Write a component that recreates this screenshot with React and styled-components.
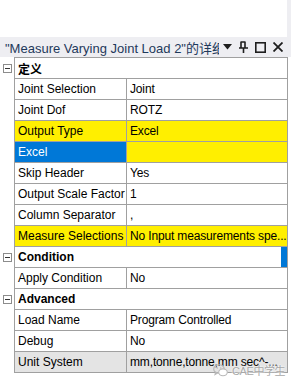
import React from "react";
import styled, { createGlobalStyle } from "styled-components";

const GlobalStyle = createGlobalStyle`
  html, body {
    margin: 0;
    padding: 0;
    background: #ffffff;
  }
  body {
    font-family: "Liberation Sans", "Noto Sans CJK SC", sans-serif;
  }
`;

const rows = [
  { type: "cat", label: "定义" },
  { name: "Joint Selection", value: "Joint" },
  { name: "Joint Dof", value: "ROTZ" },
  { name: "Output Type", value: "Excel", tone: "yellow" },
  { name: "Excel", value: "", tone: "selected" },
  { name: "Skip Header", value: "Yes" },
  { name: "Output Scale Factor", value: "1" },
  { name: "Column Separator", value: "," },
  { name: "Measure Selections", value: "No Input measurements spe...", tone: "yellow" },
  { type: "cat", label: "Condition", marker: true },
  { name: "Apply Condition", value: "No" },
  { type: "cat", label: "Advanced" },
  { name: "Load Name", value: "Program Controlled" },
  { name: "Debug", value: "No" },
  { name: "Unit System", value: "mm,tonne,tonne,mm sec^-...", tone: "readonly" },
];

export default function App() {
  return (
    <>
      <GlobalStyle />
      <Page>
        <TopSpace />
        <TitleBar>
          <TitleText>"Measure Varying Joint Load 2"的详细信息</TitleText>
          <TitleIcons>
            <svg width="9" height="6" viewBox="0 0 9 6">
              <path d="M0 0 H9 L4.5 5.5 Z" fill="#1e1e1e" />
            </svg>
            <svg width="9" height="12" viewBox="0 0 9 12">
              <path d="M2 0.5 V7 M6 0.5 V7 M2 1 H6 M0 7 H9 M4.5 7 V12" stroke="#1e1e1e" strokeWidth="1.6" fill="none" />
            </svg>
            <svg width="11" height="11" viewBox="0 0 11 11">
              <rect x="0.8" y="0.8" width="9.4" height="9.4" stroke="#1e1e1e" strokeWidth="1.6" fill="none" />
            </svg>
            <svg width="10" height="10" viewBox="0 0 10 10">
              <path d="M0.5 0.5 L9.5 9.5 M9.5 0.5 L0.5 9.5" stroke="#1e1e1e" strokeWidth="1.8" />
            </svg>
          </TitleIcons>
        </TitleBar>
        <Sheet>
          {rows.map((r, i) =>
            r.type === "cat" ? (
              <Row key={i} $first={i === 0}>
                <Gutter>
                  <Toggle />
                </Gutter>
                <CategoryCell $first={i === 0}>
                  {r.label}
                  {r.marker && <Marker />}
                </CategoryCell>
              </Row>
            ) : (
              <Row key={i}>
                <Gutter />
                <NameCell $tone={r.tone}>{r.name}</NameCell>
                <ValueCell $tone={r.tone}>{r.value}</ValueCell>
              </Row>
            )
          )}
          <Watermark>
            <svg width="15" height="13" viewBox="0 0 15 13">
              <ellipse cx="6" cy="5" rx="5.3" ry="4.3" fill="none" stroke="#b8b8b8" strokeWidth="1.1" />
              <path d="M2.5 8.3 L2 10.5 L4.5 9" fill="none" stroke="#b8b8b8" strokeWidth="1.1" />
              <ellipse cx="10" cy="8.3" rx="4.3" ry="3.4" fill="#fff" stroke="#b8b8b8" strokeWidth="1.1" />
              <circle cx="4.3" cy="4" r="0.7" fill="#b8b8b8" />
              <circle cx="7.7" cy="4" r="0.7" fill="#b8b8b8" />
            </svg>
            <span>CAE中学生</span>
          </Watermark>
        </Sheet>
      </Page>
    </>
  );
}

const Page = styled.div`
  position: relative;
  width: 291px;
  height: 386px;
  background: #ffffff;
  overflow: hidden;
`;

const TopSpace = styled.div`
  height: 37px;
  box-sizing: border-box;
  border-right: 4px solid #eeeef2;
`;

const TitleBar = styled.div`
  display: flex;
  align-items: center;
  height: 20px;
  background: #eeeef2;
  padding-left: 5px;
  padding-right: 8px;
`;

const TitleText = styled.div`
  width: 216px;
  overflow: hidden;
  white-space: nowrap;
  font-size: 13px;
  color: #1e395b;
`;

const TitleIcons = styled.div`
  display: flex;
  align-items: center;
  gap: 7px;
  margin-left: 4px;
`;

const Sheet = styled.div`
  position: relative;
  display: flex;
  flex-direction: column;
  width: 288px;
`;

const Row = styled.div`
  display: flex;
  height: ${(p) => (p.$first ? 22 : 21)}px;
  font-size: 12px;
  color: #000;
`;

const Gutter = styled.div`
  width: 14px;
  flex: none;
  display: flex;
  align-items: center;
  padding-left: 3px;
  box-sizing: border-box;
`;

const Toggle = styled.div`
  position: relative;
  width: 9px;
  height: 9px;
  box-sizing: border-box;
  border: 1px solid #8c8c8c;
  background: #fff;
  &::after {
    content: "";
    position: absolute;
    left: 1px;
    right: 1px;
    top: 3px;
    height: 1px;
    background: #333;
  }
`;

const cellBg = (tone) =>
  tone === "yellow"
    ? "#ffef00"
    : tone === "selected"
    ? "#0078d7"
    : tone === "readonly"
    ? "#e4e4e4"
    : "#ffffff";

const Cell = styled.div`
  box-sizing: border-box;
  display: flex;
  align-items: center;
  padding-left: 3px;
  border-left: 1px solid #a0a0a0;
  border-bottom: 1px solid #a0a0a0;
  white-space: nowrap;
  overflow: hidden;
`;

const CategoryCell = styled(Cell)`
  position: relative;
  flex: 1;
  font-weight: 700;
  border-right: 1px solid #a0a0a0;
  border-top: ${(p) => (p.$first ? "1px solid #a0a0a0" : "none")};
`;

const NameCell = styled(Cell)`
  width: 112px;
  flex: none;
  background: ${(p) => cellBg(p.$tone)};
  color: ${(p) => (p.$tone === "selected" ? "#ffffff" : "#000")};
`;

const ValueCell = styled(Cell)`
  flex: 1;
  border-right: 1px solid #a0a0a0;
  letter-spacing: -0.15px;
  background: ${(p) => (p.$tone === "selected" ? "#ffef00" : cellBg(p.$tone))};
`;

const Marker = styled.div`
  position: absolute;
  right: 0;
  top: 0;
  bottom: 0;
  width: 6px;
  background: #0078d7;
`;

const Watermark = styled.div`
  position: absolute;
  left: 213px;
  bottom: -5px;
  display: flex;
  align-items: center;
  gap: 4px;
  white-space: nowrap;
  font-size: 11px;
  letter-spacing: -0.4px;
  color: #a8a8a8;
  text-shadow: 0 0 2px #fff, 0 0 2px #fff;
`;
